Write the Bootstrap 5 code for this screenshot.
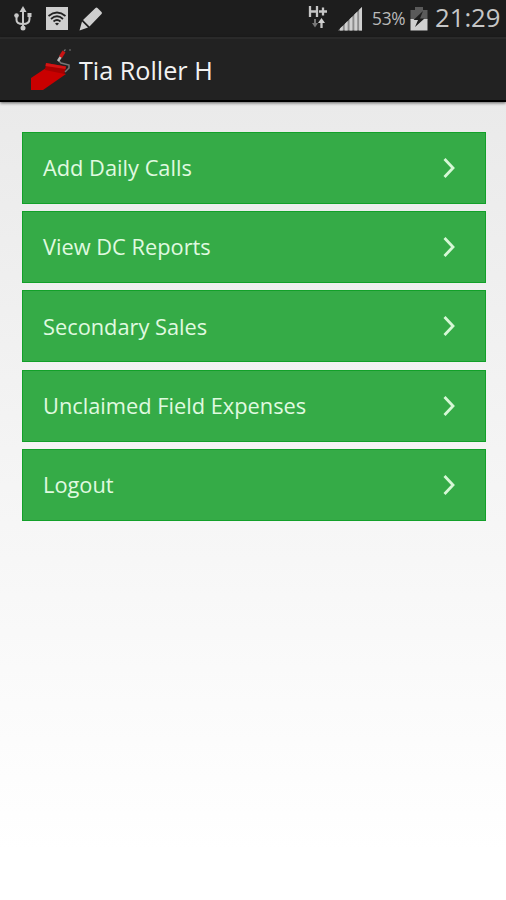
<!DOCTYPE html>
<html lang="en">
<head>
<meta charset="utf-8">
<meta name="viewport" content="width=device-width, initial-scale=1">
<title>Tia Roller H</title>
<link href="https://cdn.jsdelivr.net/npm/bootstrap@5.3.0/dist/css/bootstrap.min.css" rel="stylesheet">
<style>
body{font-family:"Open Sans","Noto Sans",sans-serif;min-height:900px;background:linear-gradient(#eaeaea 100px,#f4f4f4 450px,#fff 850px) no-repeat #fff;overflow:hidden}
.status-strip{height:37px;background:#1d1d1d;color:#c6c6c6;padding:0 5px 0 13px}
.status-strip svg,.app-header svg,.menu-entry svg{display:block;flex:none}
.ico-wifi{margin-left:13px}
.ico-pen{margin-left:11px}
.ico-signal{margin-left:10px}
.ico-battery{margin-left:3px}
.pct{font-size:17.3px;line-height:34px;width:35px;margin-left:9px;letter-spacing:-.2px;color:#b9b9b9;white-space:nowrap}
.clock{font-size:25.7px;line-height:34px;width:66px;margin-left:7px;padding-bottom:1px;white-space:nowrap}
.app-header{height:65px;background:#222;border-top:2px solid #2a2a2a;border-bottom:2px solid #000;padding-left:30px;box-shadow:0 1px 3px rgba(0,0,0,.6)}
.app-title{font-size:25.2px;line-height:34px;color:#f2f2f2;margin-left:6px;font-weight:400;white-space:nowrap}
.menu-list{padding:29.6px 20px 0 22px;gap:7.4px}
.menu-entry{height:72px;background:#35ab47;border:1px solid #12a029;color:#e0fae0;padding:0 30px 0 20px;font-size:21.8px;text-decoration:none}
.menu-entry span{padding-top:1px}
</style>
</head>
<body>
<header>
  <div class="status-strip d-flex align-items-center">
    <svg width="20" height="26" viewBox="0 0 20 26" fill="none" stroke="#c8c8c8" stroke-width="2"><path d="M10 4V22M3.500 10V14Q3.500 18 10 18Q16.500 18 16.500 13V10"/><path d="M10 0L13.500 6H6.500Z" fill="#c8c8c8" stroke="none"/><circle cx="10" cy="22" r="2.500" fill="#c8c8c8" stroke="none"/><circle cx="3.500" cy="9.500" r="2.300" fill="#c8c8c8" stroke="none"/><path d="M14.500 7h4v4h-4z" fill="#c8c8c8" stroke="none"/></svg>
    <svg class="ico-wifi" width="22" height="23" viewBox="0 0 22 23"><path fill="#cecece" d="M0 0h22v23H0z"/><g fill="none" stroke="#222" stroke-width="1.700"><path d="M2.500 9Q11 2 19.500 9M5 12Q11 6.500 17 12M7.500 14.500Q11 11.500 14.500 14.500"/></g><path d="M9 16.500Q11 15 13 16.500L11 18.500Z" fill="#222"/></svg>
    <svg class="ico-pen" width="24" height="24" viewBox="0 0 24 24" fill="#cecece"><path d="M16.500 1Q17.500 0 18.500 1L22.500 5Q23.500 6 22.500 7L10.500 19.500L4 13Z"/><path d="M3 14.500L9 20.500L.500 23.500Z"/></svg>
    <div class="ms-auto d-flex align-items-center">
      <svg width="20" height="26" viewBox="0 0 20 26" fill="none" stroke="#c5c5c5" stroke-width="2.300"><path d="M2 0V11M9 0V11M2 5.500H9M11 5.500H19M15 1.500V9.500"/><path d="M7 13V19" stroke="#777" stroke-width="2"/><path d="M4 17H10L7 21.500Z" fill="#777" stroke="none"/><path d="M13.500 16V22"/><path d="M10 17L13.500 12L17 17Z" fill="#d2d2d2" stroke="none"/></svg>
      <svg class="ico-signal" width="25" height="24" viewBox="0 0 26 25"><path d="M0 24.500L25 0V24.500Z" fill="#8c8c8c"/><path d="M2 22.500L5 19.600V24.500H2ZM7 17.600L10 14.700V24.500H7ZM12 12.700L15 9.800V24.500H12ZM17 7.800L20 4.900V24.500H17ZM22 2.900L25 0V24.500H22Z" fill="#d0d0d0"/></svg>
      <span class="pct">53%</span>
      <svg class="ico-battery" width="18" height="24" viewBox="0 0 18 24"><path d="M5 0H13V3H17.500V13H.500V3H5Z" fill="#5a5a5a"/><path d="M.500 12H17.500V23.500H.500Z" fill="#d0d0d0"/><path d="M13 4L3.500 13H8L5 20L14.500 11.500H10Z" fill="#1d1d1d"/></svg>
      <span class="clock">21:29</span>
    </div>
  </div>
  <div class="app-header d-flex align-items-center">
    <svg width="43" height="44" viewBox="0 0 43 44"><path d="M1 30L16 20L36 26L13 42H1Z" fill="#c90000"/><path d="M16 15L36 18.500L34.500 26L15 22Z" fill="#a60000"/><path d="M16 15L36 18.500L35.500 21L15.500 18Z" fill="#d31414"/><path d="M28 12L31 15L39 17V20L35 24" fill="none" stroke="#777" stroke-width="1.500"/><path d="M28 13L31 8.500" stroke="#bbb" stroke-width="2.500"/><path d="M30.500 9L34 3.500" stroke="#c91414" stroke-width="3.500"/><path d="M34 3L35.500 1.500M39 2H41" stroke="#777" stroke-width="1.200"/></svg>
    <h1 class="app-title mb-0">Tia Roller H</h1>
  </div>
</header>
<main class="menu-list d-flex flex-column">
  <a class="menu-entry d-flex align-items-center justify-content-between" href="#"><span>Add Daily Calls</span><svg width="12" height="20" viewBox="0 0 12 20" fill="none" stroke="#d6f8d6" stroke-width="2.800"><path d="M1.500 1L10 10L1.500 19"/></svg></a>
  <a class="menu-entry d-flex align-items-center justify-content-between" href="#"><span>View DC Reports</span><svg width="12" height="20" viewBox="0 0 12 20" fill="none" stroke="#d6f8d6" stroke-width="2.800"><path d="M1.500 1L10 10L1.500 19"/></svg></a>
  <a class="menu-entry d-flex align-items-center justify-content-between" href="#"><span>Secondary Sales</span><svg width="12" height="20" viewBox="0 0 12 20" fill="none" stroke="#d6f8d6" stroke-width="2.800"><path d="M1.500 1L10 10L1.500 19"/></svg></a>
  <a class="menu-entry d-flex align-items-center justify-content-between" href="#"><span>Unclaimed Field Expenses</span><svg width="12" height="20" viewBox="0 0 12 20" fill="none" stroke="#d6f8d6" stroke-width="2.800"><path d="M1.500 1L10 10L1.500 19"/></svg></a>
  <a class="menu-entry d-flex align-items-center justify-content-between" href="#"><span>Logout</span><svg width="12" height="20" viewBox="0 0 12 20" fill="none" stroke="#d6f8d6" stroke-width="2.800"><path d="M1.500 1L10 10L1.500 19"/></svg></a>
</main>
<script src="https://cdn.jsdelivr.net/npm/bootstrap@5.3.0/dist/js/bootstrap.bundle.min.js"></script>
</body>
</html>
